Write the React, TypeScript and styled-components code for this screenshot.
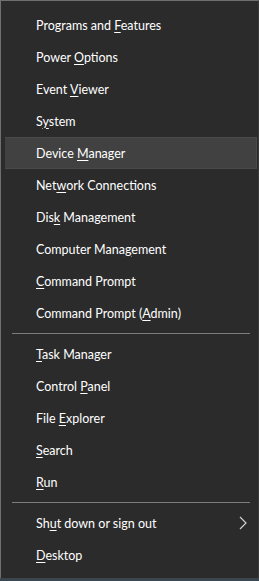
import React from "react";
import styled, { createGlobalStyle } from "styled-components";

const Global = createGlobalStyle`
  html, body { margin: 0; padding: 0; background: #3a4650; }
  body { width: 259px; height: 581px; overflow: hidden; }
`;

const Menu = styled.div`
  box-sizing: border-box;
  width: 259px;
  height: 578px;
  background: #2b2b2b;
  border-top: 1px solid #6f6f6f;
  border-left: 1px solid #6f6f6f;
  border-right: 1px solid #3a3a3a;
  padding: 8px 1px 7px 4px;
  display: flex;
  flex-direction: column;
  font-family: "Lato", "Noto Sans", sans-serif;
  font-size: 12.5px;
  color: #ffffff;
`;

const Item = styled.div<{ $active?: boolean }>`
  box-sizing: border-box;
  height: 32px;
  display: flex;
  align-items: center;
  padding-left: 31px;
  padding-right: 9px;
  background: ${(p) => (p.$active ? "#414141" : "transparent")};
  border: 1px solid ${(p) => (p.$active ? "#4a4a4a" : "transparent")};
  border-left-width: 0;
`;

const Label = styled.span`
  flex: 1;
  white-space: nowrap;
  u {
    text-decoration: underline;
    text-underline-offset: 2px;
    text-decoration-thickness: 1px;
  }
`;

const Separator = styled.div`
  height: 9px;
  display: flex;
  align-items: center;
  padding: 0 7px 0 7px;
  &::before {
    content: "";
    flex: 1;
    height: 1px;
    background: #7d7d7d;
  }
`;

const Chevron = () => (
  <svg width="8" height="14" viewBox="0 0 8 14" fill="none">
    <path d="M1 1 L7 7 L1 13" stroke="#d0d0d0" strokeWidth="1.2" />
  </svg>
);

type Entry = { pre: string; key: string; post: string; active?: boolean; sub?: boolean } | "sep";

const entries: Entry[] = [
  { pre: "Programs and ", key: "F", post: "eatures" },
  { pre: "Power ", key: "O", post: "ptions" },
  { pre: "Event ", key: "V", post: "iewer" },
  { pre: "S", key: "y", post: "stem" },
  { pre: "Device ", key: "M", post: "anager", active: true },
  { pre: "Net", key: "w", post: "ork Connections" },
  { pre: "Dis", key: "k", post: " Management" },
  { pre: "Computer Mana", key: "g", post: "ement" },
  { pre: "", key: "C", post: "ommand Prompt" },
  { pre: "Command Prompt (", key: "A", post: "dmin)" },
  "sep",
  { pre: "", key: "T", post: "ask Manager" },
  { pre: "Control ", key: "P", post: "anel" },
  { pre: "File ", key: "E", post: "xplorer" },
  { pre: "", key: "S", post: "earch" },
  { pre: "", key: "R", post: "un" },
  "sep",
  { pre: "Sh", key: "u", post: "t down or sign out", sub: true },
  { pre: "", key: "D", post: "esktop" },
];

export default function App() {
  return (
    <>
      <Global />
      <Menu>
        {entries.map((e, i) =>
          e === "sep" ? (
            <Separator key={i} />
          ) : (
            <Item key={i} $active={e.active}>
              <Label>
                {e.pre}
                <u>{e.key}</u>
                {e.post}
              </Label>
              {e.sub && <Chevron />}
            </Item>
          )
        )}
      </Menu>
    </>
  );
}
